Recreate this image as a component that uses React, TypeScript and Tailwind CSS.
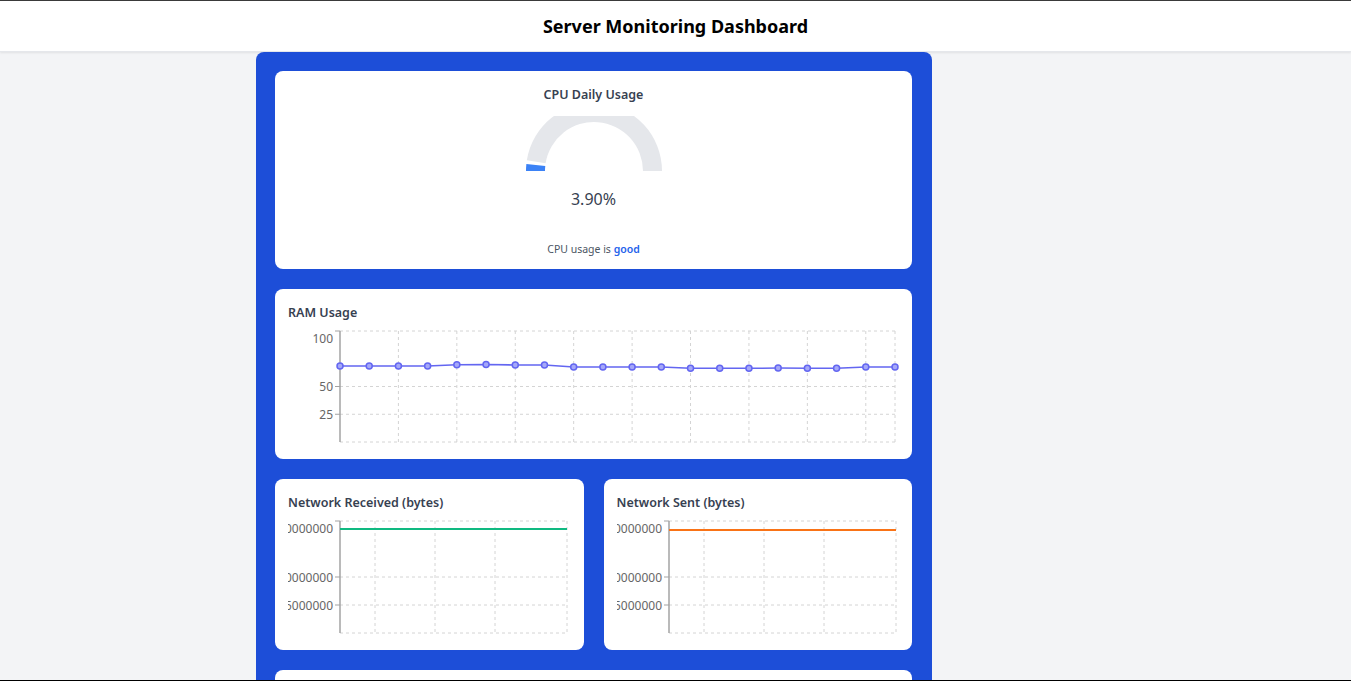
import React from 'react';

const ramValues = [
  68.5, 68.5, 68.5, 68.5, 69.6, 69.8, 69.4, 69.4, 67.6, 67.6,
  67.6, 67.6, 66.4, 66.4, 66.4, 66.6, 66.4, 66.4, 67.6, 67.6,
];

const polar = (cx: number, cy: number, r: number, deg: number) => {
  const a = (deg * Math.PI) / 180;
  return [cx + r * Math.cos(a), cy - r * Math.sin(a)];
};

const arcPath = (cx: number, cy: number, r0: number, r1: number, from: number, to: number) => {
  const [x1, y1] = polar(cx, cy, r1, from);
  const [x2, y2] = polar(cx, cy, r1, to);
  const [x3, y3] = polar(cx, cy, r0, to);
  const [x4, y4] = polar(cx, cy, r0, from);
  const large = Math.abs(from - to) > 180 ? 1 : 0;
  return `M${x1} ${y1} A${r1} ${r1} 0 ${large} 1 ${x2} ${y2} L${x3} ${y3} A${r0} ${r0} 0 ${large} 0 ${x4} ${y4} Z`;
};

const Gauge: React.FC = () => (
  <svg width={136} height={56} className="block">
    <path d={arcPath(68, 55, 49, 68, 171, 0)} fill="#e5e7eb" />
    <path d={arcPath(68, 55, 49, 68, 180, 174)} fill="#3b82f6" />
  </svg>
);

const AXIS_X = 52;
const TOP = 6;

interface LineChartProps {
  width: number;
  height: number;
  right: number;
  bottom: number;
  ticks: { label: string; frac: number }[];
  vGrid: number[];
  children: React.ReactNode;
}

const ChartFrame: React.FC<LineChartProps> = ({ width, height, right, bottom, ticks, vGrid, children }) => {
  const yAt = (f: number) => bottom - (bottom - TOP) * f;
  return (
    <svg width={width} height={height} className="block" style={{ fontFamily: '"Noto Sans", sans-serif' }}>
      {/* grid */}
      {[1, 0.5, 0.25, 0].map((f) => (
        <line key={`h-${f}`} x1={AXIS_X} x2={right} y1={yAt(f)} y2={yAt(f)} stroke="#d4d4d4" strokeDasharray="3 3" />
      ))}
      {vGrid.map((x) => (
        <line key={`v-${x}`} x1={x} x2={x} y1={TOP} y2={bottom} stroke="#d4d4d4" strokeDasharray="3 3" />
      ))}
      {/* y axis */}
      <line x1={AXIS_X} x2={AXIS_X} y1={TOP} y2={bottom} stroke="#a3a3a3" strokeWidth={1.5} />
      {ticks.map((t) => {
        const y = yAt(t.frac);
        return (
          <g key={t.label}>
            <line x1={AXIS_X - 5} x2={AXIS_X} y1={y} y2={y} stroke="#a3a3a3" />
            <text
              x={AXIS_X - 7}
              y={t.frac === 1 ? y + 7 : y}
              textAnchor="end"
              dominantBaseline="central"
              fontSize={12}
              fill="#666"
            >
              {t.label}
            </text>
          </g>
        );
      })}
      {children}
    </svg>
  );
};

const RamChart: React.FC = () => {
  const bottom = 117;
  const step = (607 - AXIS_X) / 19;
  const pts = ramValues.map((v, i) => [AXIS_X + i * step, bottom - ((bottom - TOP) * v) / 100]);
  const vGrid = Array.from({ length: 10 }).map((_, i) => AXIS_X + (i + 1) * step * 2);
  vGrid[vGrid.length - 1] = 607;
  return (
    <ChartFrame
      width={612}
      height={125}
      right={607}
      bottom={bottom}
      vGrid={vGrid}
      ticks={[
        { label: '100', frac: 1 },
        { label: '50', frac: 0.5 },
        { label: '25', frac: 0.25 },
      ]}
    >
      <polyline points={pts.map((p) => p.join(',')).join(' ')} fill="none" stroke="#6366f1" strokeWidth={1.6} />
      {pts.map(([x, y], i) => (
        <circle key={i} cx={x} cy={y} r={3} fill="#a5a8f8" stroke="#6366f1" strokeWidth={1.5} />
      ))}
    </ChartFrame>
  );
};

const NetChart: React.FC<{ color: string; lineY: number }> = ({ color, lineY }) => (
  <ChartFrame
    width={286}
    height={125}
    right={279}
    bottom={118}
    vGrid={[87, 147, 207, 279]}
    ticks={[
      { label: '100000000', frac: 1 },
      { label: '50000000', frac: 0.5 },
      { label: '25000000', frac: 0.25 },
    ]}
  >
    <line x1={AXIS_X} x2={279} y1={lineY} y2={lineY} stroke={color} strokeWidth={2} />
  </ChartFrame>
);

const Card: React.FC<{ title: string; className?: string; children: React.ReactNode }> = ({ title, className = '', children }) => (
  <div className={`h-[170px] rounded-lg bg-white pl-[13px] pt-[15px] ${className}`}>
    <h2 className="text-[12.5px] leading-[18px] font-semibold text-[#374151]">{title}</h2>
    <div className="mt-[3px]">{children}</div>
  </div>
);

export default function App() {
  return (
    <div
      className="h-[681px] overflow-hidden border-t border-b border-t-[#3a3a3a] border-b-black bg-[#f3f4f6]"
      style={{ fontFamily: '"Noto Sans", "Open Sans", sans-serif' }}
    >
      {/* Header */}
      <header className="h-[51px] bg-white flex items-center justify-center shadow-[0_1px_2px_rgba(0,0,0,0.08)] border-b border-[#e5e7eb]">
        <h1 className="text-[18px] font-bold text-black">Server Monitoring Dashboard</h1>
      </header>

      <div className="ml-[256px] w-[676px] rounded-lg bg-[#1d4ed8] pt-[19px] pl-[19px] pr-[20px] pb-5 space-y-5">
        {/* CPU */}
        <div className="h-[198px] rounded-lg bg-white flex flex-col items-center">
          <h2 className="mt-[15px] text-[12.5px] leading-[18px] font-semibold text-[#374151]">CPU Daily Usage</h2>
          <div className="mt-[12px]">
            <Gauge />
          </div>
          <div className="mt-[16px] text-[16px] leading-[22px] text-[#374151]">3.90%</div>
          <div className="mt-[31px] text-[10.5px] leading-[16px] text-[#4b5563]">
            CPU usage is <span className="font-semibold text-[#2563eb]">good</span>
          </div>
        </div>

        {/* RAM */}
        <Card title="RAM Usage">
          <RamChart />
        </Card>

        {/* Network */}
        <div className="grid grid-cols-2 gap-5">
          <Card title="Network Received (bytes)" className="h-[171px]">
            <NetChart color="#10b981" lineY={14} />
          </Card>
          <Card title="Network Sent (bytes)" className="h-[171px]">
            <NetChart color="#f97316" lineY={15} />
          </Card>
        </div>

        <div className="h-[170px] rounded-lg bg-white" />
      </div>
    </div>
  );
}
